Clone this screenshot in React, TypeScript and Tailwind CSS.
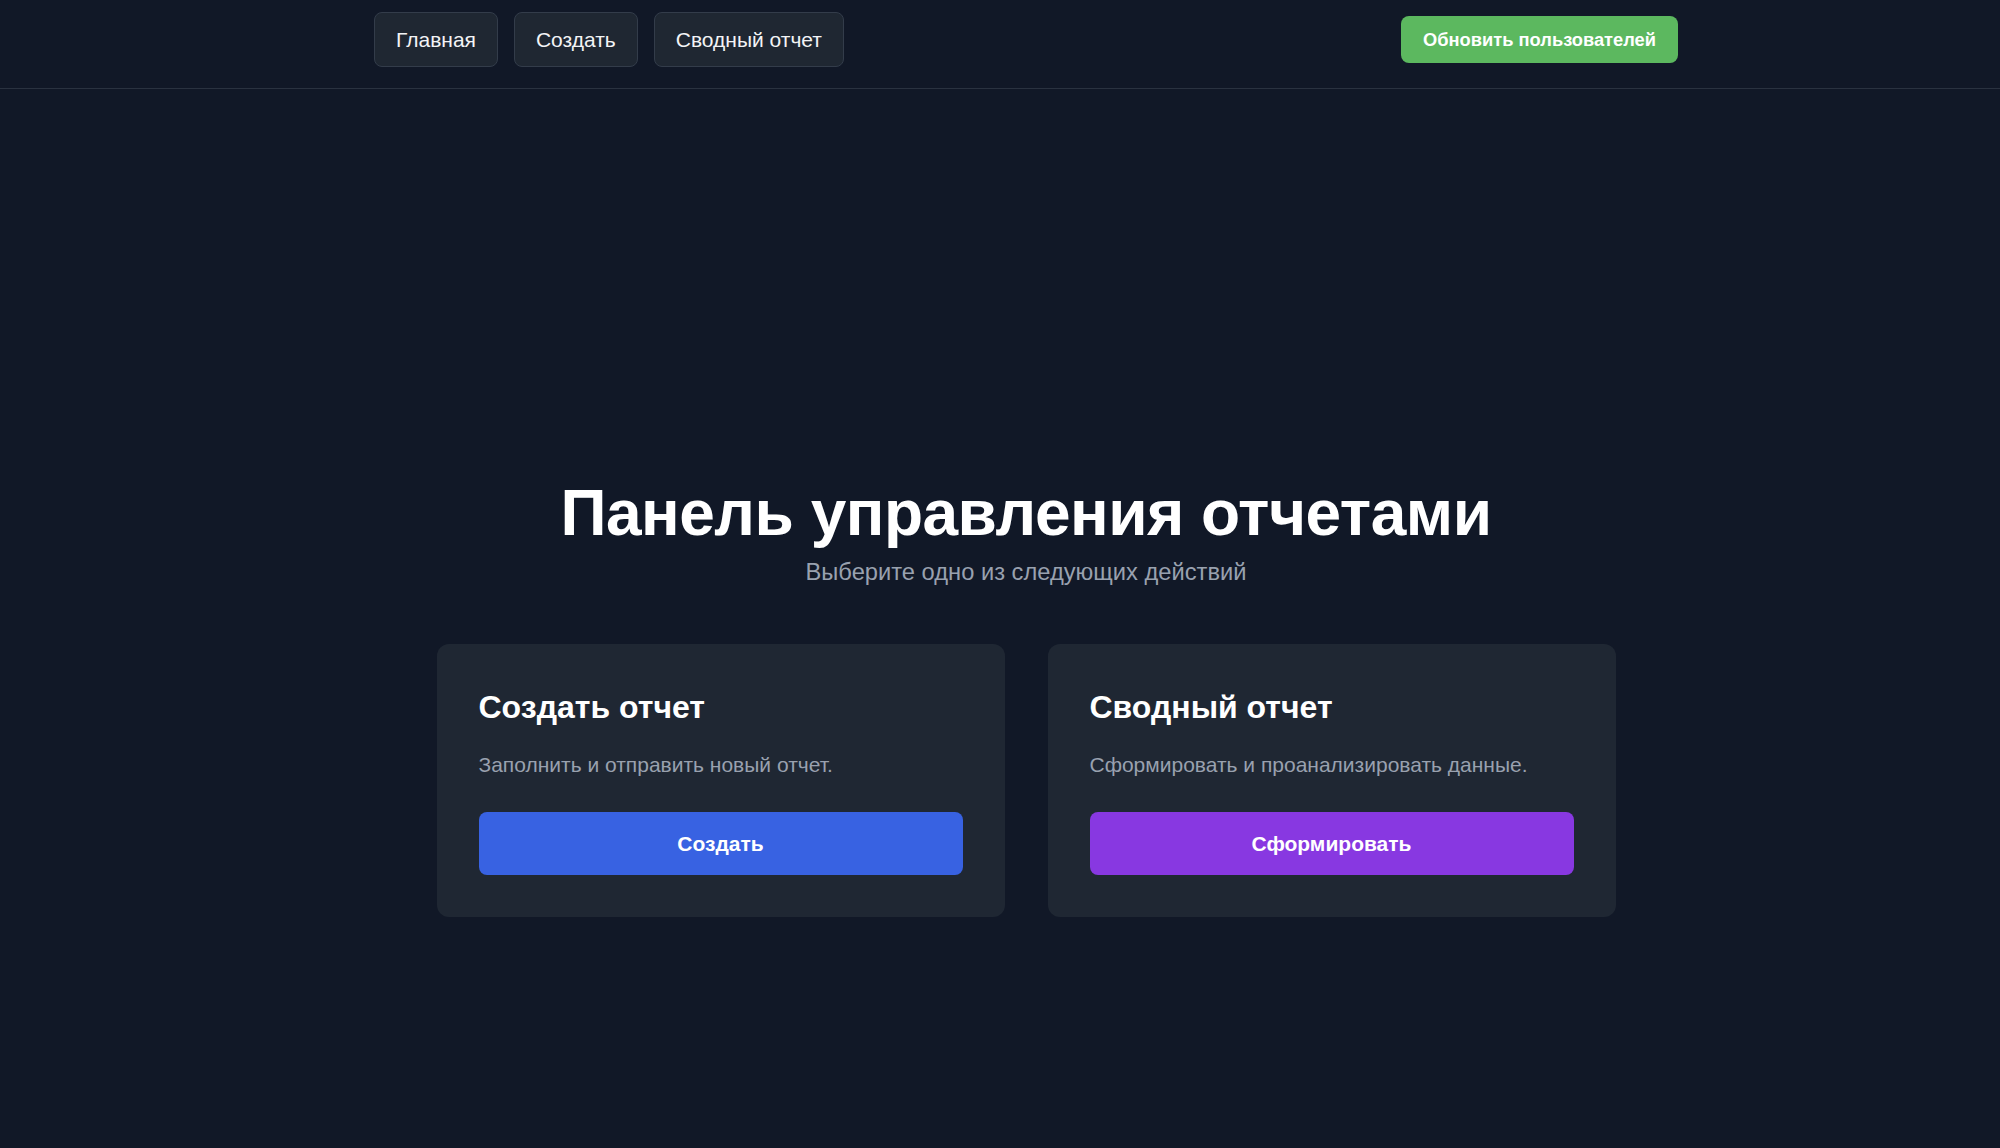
import React from 'react';

const navItems = ['Главная', 'Создать', 'Сводный отчет'];

const cards = [
  {
    title: 'Создать отчет',
    desc: 'Заполнить и отправить новый отчет.',
    action: 'Создать',
    btn: 'bg-[#3862e2] hover:bg-[#2f55cc]',
  },
  {
    title: 'Сводный отчет',
    desc: 'Сформировать и проанализировать данные.',
    action: 'Сформировать',
    btn: 'bg-[#8838e1] hover:bg-[#7a2fd0]',
  },
];

export default function App() {
  return (
    <div className="min-h-screen bg-[#111827] font-['Liberation_Sans',Arial,sans-serif] text-white">
      {/* Top bar */}
      <header className="border-b border-[#2a3240] pl-[52px]">
        <div className="mx-auto flex w-[1304px] items-center justify-between pt-3 pb-[21px]">
          <nav className="flex gap-4">
            {navItems.map((item) => (
              <button
                key={item}
                className="h-[55px] rounded-lg border border-[#333c4a] bg-[#1f2732] px-[21px] text-[21px] text-gray-100"
              >
                {item}
              </button>
            ))}
          </nav>
          <button className="h-[47px] rounded-lg bg-[#5cb85f] px-[22px] text-[18.3px] font-bold text-white">
            Обновить пользователей
          </button>
        </div>
      </header>

      {/* Dashboard */}
      <main className="flex flex-col items-center pl-[52px] pt-[392px]">
        <h1 className="text-[64px] leading-none font-bold tracking-[-0.5px]">Панель управления отчетами</h1>
        <p className="mt-[11px] text-[23.7px] leading-8 text-gray-400">Выберите одно из следующих действий</p>

        <div className="mt-14 grid grid-cols-2 gap-[43px]">
          {cards.map((card) => (
            <div key={card.title} className="flex w-[568px] flex-col rounded-xl bg-[#1f2733] px-[42px] pt-[45px] pb-[42px]">
              <h2 className="text-[32px] leading-[36px] font-bold">{card.title}</h2>
              <p className="mt-[26px] text-[21px] leading-7 text-gray-400">{card.desc}</p>
              <button className={`mt-[33px] h-[63px] rounded-lg text-[21px] font-bold text-white ${card.btn}`}>
                {card.action}
              </button>
            </div>
          ))}
        </div>
      </main>
    </div>
  );
}
